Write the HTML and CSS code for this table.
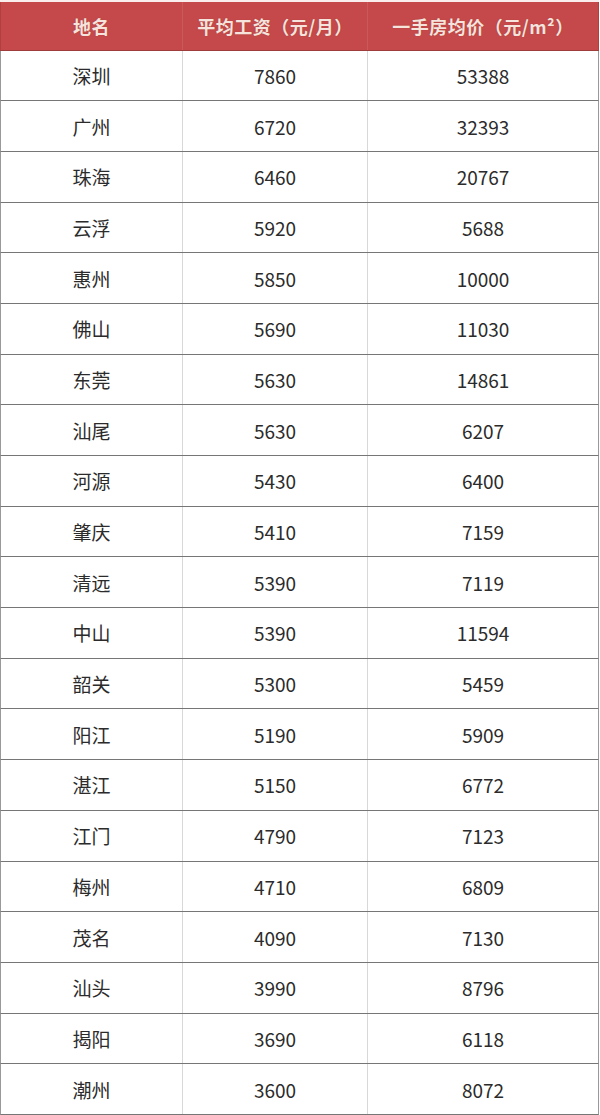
FILE: index.html
```html
<!DOCTYPE html>
<html lang="zh">
<head>
<meta charset="utf-8">
<link rel="stylesheet" href="styles.css">
</head>
<body>
<div class="table">
  <div class="row head"><div class="c">地名</div><div class="c">平均工资（元/月）</div><div class="c">一手房均价（元/m²）</div></div>
  <div class="row"><div class="c">深圳</div><div class="c">7860</div><div class="c">53388</div></div>
  <div class="row"><div class="c">广州</div><div class="c">6720</div><div class="c">32393</div></div>
  <div class="row"><div class="c">珠海</div><div class="c">6460</div><div class="c">20767</div></div>
  <div class="row"><div class="c">云浮</div><div class="c">5920</div><div class="c">5688</div></div>
  <div class="row"><div class="c">惠州</div><div class="c">5850</div><div class="c">10000</div></div>
  <div class="row"><div class="c">佛山</div><div class="c">5690</div><div class="c">11030</div></div>
  <div class="row"><div class="c">东莞</div><div class="c">5630</div><div class="c">14861</div></div>
  <div class="row"><div class="c">汕尾</div><div class="c">5630</div><div class="c">6207</div></div>
  <div class="row"><div class="c">河源</div><div class="c">5430</div><div class="c">6400</div></div>
  <div class="row"><div class="c">肇庆</div><div class="c">5410</div><div class="c">7159</div></div>
  <div class="row"><div class="c">清远</div><div class="c">5390</div><div class="c">7119</div></div>
  <div class="row"><div class="c">中山</div><div class="c">5390</div><div class="c">11594</div></div>
  <div class="row"><div class="c">韶关</div><div class="c">5300</div><div class="c">5459</div></div>
  <div class="row"><div class="c">阳江</div><div class="c">5190</div><div class="c">5909</div></div>
  <div class="row"><div class="c">湛江</div><div class="c">5150</div><div class="c">6772</div></div>
  <div class="row"><div class="c">江门</div><div class="c">4790</div><div class="c">7123</div></div>
  <div class="row"><div class="c">梅州</div><div class="c">4710</div><div class="c">6809</div></div>
  <div class="row"><div class="c">茂名</div><div class="c">4090</div><div class="c">7130</div></div>
  <div class="row"><div class="c">汕头</div><div class="c">3990</div><div class="c">8796</div></div>
  <div class="row"><div class="c">揭阳</div><div class="c">3690</div><div class="c">6118</div></div>
  <div class="row"><div class="c">潮州</div><div class="c">3600</div><div class="c">8072</div></div>
</div>
</body>
</html>
```
FILE: styles.css
```css
html, body {
  margin: 0;
  padding: 0;
  background: #ffffff;
}
body {
  width: 600px;
  height: 1115px;
  overflow: hidden;
  font-family: "Noto Sans CJK SC", "Noto Sans", sans-serif;
}
.table {
  width: 599px;
  padding-top: 2px;
  background: #fbeeee;
  box-sizing: border-box;
}
.row {
  display: grid;
  grid-template-columns: 182px 185px 1fr;
  height: 50.7px;
  box-sizing: border-box;
  border-bottom: 1.5px solid #767676;
  border-left: 1px solid #999999;
  border-right: 1px solid #999999;
  background: #ffffff;
}
.row.head {
  height: 48.5px;
  background: #c5494b;
  border-color: #b04040;
  border-bottom: 1.5px solid #9e3c3c;
}
.c {
  display: flex;
  align-items: center;
  justify-content: center;
  font-size: 19px;
  color: #2b2b2b;
  border-right: 1px solid #d8d8d8;
}
.c:last-child {
  border-right: none;
}
.head .c {
  color: #f6e3dc;
  font-weight: 700;
  font-size: 18px;
  letter-spacing: 0.5px;
  border-right: 1px solid #c95a5a;
  text-shadow: 0 0 1px rgba(120, 40, 40, 0.6);
}
.head .c:last-child {
  border-right: none;
}
```
